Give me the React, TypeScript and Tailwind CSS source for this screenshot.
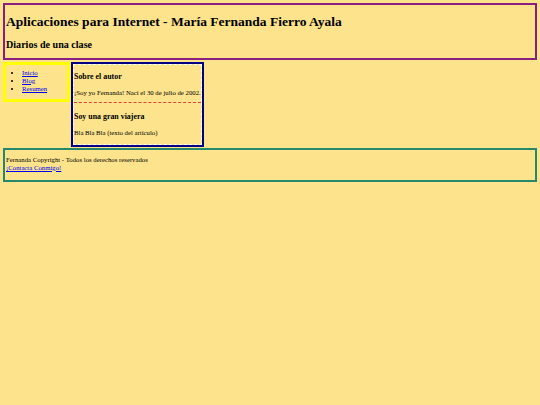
export default function App() {
  return (
    <div className="min-h-screen bg-[#fce38c] p-[3px] font-['Liberation_Serif',serif] text-black">
      <header className="border-2 border-[#8a1f80] px-px pt-[9px] pb-[7px]">
        <h1 className="text-[13.5px] font-bold leading-[15.5px]">
          Aplicaciones para Internet - María Fernanda Fierro Ayala
        </h1>
        <h2 className="mt-[9.5px] text-[10.1px] font-bold leading-[11.6px]">Diarios de una clase</h2>
      </header>

      <div className="mt-[2px] flex items-start gap-px">
        <nav className="w-[67px] border-[3px] border-[#ffff00] pt-[4px] pb-[6px] pl-[7px]">
          <ul className="list-disc pl-[9px] text-[6.75px] leading-[8px]">
            <li>
              <a href="#" className="text-[#0000ee] underline">Inicio</a>
            </li>
            <li>
              <a href="#" className="text-[#0000ee] underline">Blog</a>
            </li>
            <li>
              <a href="#" className="text-[#0000ee] underline">Resumen</a>
            </li>
          </ul>
        </nav>

        <article className="w-[133px] border-2 border-[#000080]">
          <div className="border border-dashed border-white">
            <section className="border-b border-dashed border-[#e0403c] pt-[7.5px] pb-[6px]">
              <h3 className="text-[7.9px] font-bold leading-[9px]">Sobre el autor</h3>
              <p className="mt-[7.6px] whitespace-nowrap text-[6.75px] leading-[7.8px]">
                ¡Soy yo Fernanda! Nací el 30 de julio de 2002.
              </p>
            </section>
            <section className="pt-[8.5px] pb-[8px]">
              <h3 className="text-[7.9px] font-bold leading-[9px]">Soy una gran viajera</h3>
              <p className="mt-[7.6px] text-[6.75px] leading-[7.8px]">Bla Bla Bla (texto del artículo)</p>
            </section>
          </div>
        </article>
      </div>

      <footer className="mt-px border-2 border-[#27876a] px-px pt-[5.5px] pb-[8px] text-[6.75px] leading-[8px]">
        <p>Fernanda Copyright - Todos los derechos reservados</p>
        <a href="#" className="text-[#0000ee] underline">¡Contacta Conmigo!</a>
      </footer>
    </div>
  );
}
